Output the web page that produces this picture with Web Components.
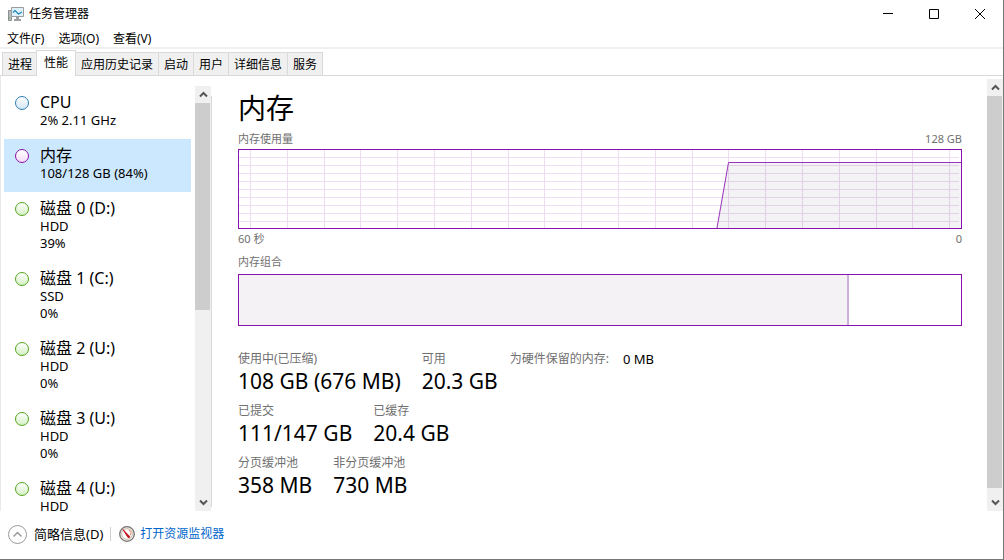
<!DOCTYPE html>
<html lang="zh-CN">
<head>
<meta charset="utf-8">
<title>任务管理器</title>
<style>
  :root {
    --purple: #8b12ae;
    --grid: #ecddf2;
    --muted: #707070;
    --line: #d9d9d9;
  }

  body {
    margin: 0;
    background: #fff;
    color: #000;
    font: 12px/16px "Noto Sans", "Noto Sans CJK SC", sans-serif;
  }
</style>
</head>
<body>
<task-manager></task-manager>

<script>
const disks = [
  ["磁盘 0 (D:)", "HDD", "39%"],
  ["磁盘 1 (C:)", "SSD", "0%"],
  ["磁盘 2 (U:)", "HDD", "0%"],
  ["磁盘 3 (U:)", "HDD", "0%"],
  ["磁盘 4 (U:)", "HDD"],
];

function define(name, html) {
  const template = document.createElement("template");
  template.innerHTML = html;

  customElements.define(name, class extends HTMLElement {
    constructor() {
      super();
      this.attachShadow({ mode: "open" }).append(template.content.cloneNode(true));
    }
  });
}

define("title-bar", `
  <style>
    :host { display: flex; height: 28px; align-items: center; padding-left: 8px; }
    .icon { width: 16px; height: 16px; margin-right: 5px; }
    h1 { flex: 1; margin: 0; font-size: 12px; font-weight: 400; }
    button { width: 46px; height: 28px; padding: 0; border: 0; background: none; display: grid; place-items: center; }
    button svg { width: 11px; height: 11px; fill: none; stroke: #000; }
  </style>
  <svg class="icon" viewBox="0 0 16 16">
    <path d="M.5 4.500h3v10h-3z" fill="#b9bdc0" stroke="#8c9093"/>
    <path d="M1 12h1" stroke="#4fae3a"/>
    <path d="M3.500 1.500h12v9h-12z" fill="#def1fb" stroke="#989c9f"/>
    <path d="M5 6.500l2-2 3.500 3.500L14 6" fill="none" stroke="#1c83b8" stroke-width="1.200"/>
    <path d="M8 11h3v2h2v2H6v-2h2z" fill="#9b9fa2"/>
  </svg>
  <h1><slot></slot></h1>
  <button aria-label="最小化"><svg viewBox="0 0 11 11"><path d="M0 4.500h10"/></svg></button>
  <button aria-label="最大化"><svg viewBox="0 0 11 11"><path d="M.5.5h9v9h-9z"/></svg></button>
  <button aria-label="关闭"><svg viewBox="0 0 11 11"><path d="M0 0l10 10M10 0L0 10"/></svg></button>
`);

define("menu-bar", `
  <style>
    :host { display: flex; gap: 14px; height: 19px; padding-left: 7px; align-items: flex-end; border-bottom: 2px solid #f0f0f0; }
    ::slotted(button) { padding: 0; border: 0; background: none; font: inherit; color: inherit; }
  </style>
  <slot></slot>
`);

define("tab-strip", `
  <style>
    :host { display: flex; height: 26px; padding-left: 2px; align-items: flex-end; border-bottom: 1px solid var(--line); }
    ::slotted(button) {
      height: 23px;
      padding: 2px 5px 0;
      margin: 0 -1px 0 0;
      border: 1px solid var(--line);
      border-bottom: 0;
      background: #f0f0f0;
      font: inherit;
      color: inherit;
    }
    ::slotted(button[aria-selected="true"]) {
      height: 26px;
      padding: 0 7px 1px;
      margin-left: -1px;
      margin-bottom: -1px;
      background: #fff;
    }
  </style>
  <slot></slot>
`);

define("scroll-bar", `
  <style>
    :host { display: flex; flex-direction: column; width: 16px; background: #f0f0f0; }
    button { height: 17px; flex: none; padding: 0; border: 0; background: none; display: grid; place-items: center; }
    svg { width: 9px; height: 7px; fill: none; stroke: #555; stroke-width: 2; }
    .track { flex: 1; }
    .thumb { height: var(--thumb); width: 15px; background: #cdcdcd; }
  </style>
  <button aria-label="向上滚动"><svg viewBox="0 0 9 7"><path d="M1 5.500L4.500 2 8 5.500"/></svg></button>
  <div class="track"><div class="thumb"></div></div>
  <button aria-label="向下滚动"><svg viewBox="0 0 9 7"><path d="M1 1.500L4.500 5 8 1.500"/></svg></button>
`);

define("resource-item", `
  <style>
    :host { display: block; --ring: #55a51c; --tint: #d5f0c5; }
    :host([kind="cpu"]) { --ring: #2a7fb5; --tint: #d3e6f1; }
    :host([kind="memory"]) { --ring: #8b12ae; --tint: #f3dcf5; }
    :host([selected]) { background: #cce8ff; }
    button {
      display: flex;
      width: 100%;
      gap: 11px;
      padding: 6px 0 10px 11px;
      border: 0;
      background: none;
      color: inherit;
      font: inherit;
      text-align: left;
    }
    i {
      box-sizing: border-box;
      width: 14px;
      height: 14px;
      margin-top: 4px;
      border: 1px solid var(--ring);
      border-radius: 50%;
      background: linear-gradient(#fff, var(--tint));
    }
    ::slotted(span) { display: block; font-size: 13px; line-height: 17px; }
    ::slotted([slot="name"]) { font-size: 16px; line-height: 20px; }
  </style>
  <button>
    <i></i>
    <span><slot name="name"></slot><slot></slot></span>
  </button>
`);

define("usage-chart", `
  <style>
    :host { display: block; border: 1px solid var(--purple); }
    svg { display: block; width: 100%; height: 78px; }
    path { fill: none; vector-effect: non-scaling-stroke; }
    .grid { stroke: var(--grid); shape-rendering: crispEdges; }
    .area { fill: rgba(20, 0, 30, .05); }
    .plot { stroke: #9a33b8; }
  </style>
  <svg viewBox="0 0 722 78" preserveAspectRatio="none">
    <path class="grid"/>
    <path class="area" d="M478 78L489.500 12.500H722V78z"/>
    <path class="plot" d="M478 78L489.500 12.500H722"/>
  </svg>
`);

define("composition-bar", `
  <style>
    :host { display: block; height: 50px; border: 1px solid var(--purple); }
    .used { width: 84.500%; height: 100%; box-sizing: border-box; background: #f4f2f4; border-right: 2px solid #cbb0d9; }
  </style>
  <div class="used"></div>
`);

define("stat-value", `
  <style>
    :host { display: block; white-space: nowrap; }
    .label { color: var(--muted); line-height: 22px; }
    .value { font-size: 21px; line-height: 22px; }
    :host([inline]) { display: flex; gap: 14px; }
    :host([inline]) .value { font-size: 13px; }
  </style>
  <div class="label"><slot name="label"></slot></div>
  <div class="value"><slot></slot></div>
`);

define("resource-list", `
  <style>
    :host { display: flex; width: 211px; flex: none; box-sizing: border-box; border-left: 1px solid #eaeaea; padding-top: 10px; }
    nav { flex: 1; margin: 0 4px 0 3px; overflow: hidden; }
    scroll-bar { --thumb: 53%; }
  </style>
  <nav>
    <resource-item kind="cpu"><span slot="name">CPU</span><span>2% 2.11 GHz</span></resource-item>
    <resource-item kind="memory" selected><span slot="name">内存</span><span>108/128 GB (84%)</span></resource-item>
    ${disks.map(([name, ...lines]) => `
      <resource-item>
        <span slot="name">${name}</span>
        ${lines.map(line => `<span>${line}</span>`).join("")}
      </resource-item>
    `).join("")}
  </nav>
  <scroll-bar></scroll-bar>
`);

define("memory-panel", `
  <style>
    :host { display: block; min-width: 0; flex: 1; padding: 12px 25px 0 26px; }
    h2 { margin: 0; font-size: 28px; font-weight: 400; line-height: 40px; }
    .row { display: flex; justify-content: space-between; color: var(--muted); font-size: 11px; line-height: 20px; }
    .row.top { line-height: 21px; }
    .composition { line-height: 25px; }
    .stats { display: flex; gap: 12px; margin-top: 22px; }
    .group { display: flex; flex-direction: column; gap: 8px; }
    .group div { display: flex; gap: 21px; }
  </style>
  <h2>内存</h2>
  <div class="row top"><span>内存使用量</span><span>128 GB</span></div>
  <usage-chart></usage-chart>
  <div class="row"><span>60 秒</span><span>0</span></div>
  <div class="row composition"><span>内存组合</span></div>
  <composition-bar></composition-bar>
  <div class="stats">
    <div class="group">
      <div>
        <stat-value><span slot="label">使用中(已压缩)</span>108 GB (676 MB)</stat-value>
        <stat-value><span slot="label">可用</span>20.3 GB</stat-value>
      </div>
      <div>
        <stat-value><span slot="label">已提交</span>111/147 GB</stat-value>
        <stat-value><span slot="label">已缓存</span>20.4 GB</stat-value>
      </div>
      <div>
        <stat-value><span slot="label">分页缓冲池</span>358 MB</stat-value>
        <stat-value><span slot="label">非分页缓冲池</span>730 MB</stat-value>
      </div>
    </div>
    <stat-value inline><span slot="label">为硬件保留的内存:</span>0 MB</stat-value>
  </div>
`);

define("status-bar", `
  <style>
    :host { display: flex; height: 46px; align-items: center; padding: 0 0 2px 8px; }
    button { display: flex; align-items: center; gap: 7px; padding: 0; border: 0; background: none; color: inherit; font: inherit; font-size: 13px; }
    hr { width: 1px; height: 14px; margin: 0 8px 0 7px; border: 0; background: #d0d0d0; }
    a { display: flex; align-items: center; gap: 5px; color: #0066cc; text-decoration: none; }
  </style>
  <button>
    <svg width="19" height="19" viewBox="0 0 19 19" fill="none" stroke="#999">
      <circle cx="9.500" cy="9.500" r="9"/>
      <path d="M5.500 11.500l4-4 4 4" stroke-width="1.500"/>
    </svg>
    简略信息(D)
  </button>
  <hr>
  <a href="#">
    <svg width="16" height="16" viewBox="0 0 16 16">
      <circle cx="8" cy="8" r="7.300" fill="#f2f0ed" stroke="#77706c" stroke-width="1.300"/>
      <circle cx="8" cy="8" r="5.300" fill="#fff" stroke="#c9b8aa"/>
      <path d="M10 4l2 2.500-1 3" fill="none" stroke="#df8b66"/>
      <path d="M4 3.500l7 7.500-2 .5z" fill="#c8141c" stroke="#c8141c"/>
    </svg>
    打开资源监视器
  </a>
`);

define("task-manager", `
  <style>
    :host {
      display: flex;
      flex-direction: column;
      height: 100vh;
      box-sizing: border-box;
      border: solid #777;
      border-width: 0 1px 1px 0;
    }
    title-bar, menu-bar, tab-strip, status-bar { flex: none; }
    main { display: flex; flex: 1; min-height: 0; }
    .divider { width: 1px; margin: 20px 0 4px; background: var(--line); }
    .page-scroll { margin-top: 3px; --thumb: 98.500%; }
  </style>
  <title-bar>任务管理器</title-bar>
  <menu-bar>
    <button>文件(F)</button>
    <button>选项(O)</button>
    <button>查看(V)</button>
  </menu-bar>
  <tab-strip role="tablist">
    <button role="tab">进程</button>
    <button role="tab" aria-selected="true">性能</button>
    <button role="tab">应用历史记录</button>
    <button role="tab">启动</button>
    <button role="tab">用户</button>
    <button role="tab">详细信息</button>
    <button role="tab">服务</button>
  </tab-strip>
  <main>
    <resource-list></resource-list>
    <div class="divider"></div>
    <memory-panel></memory-panel>
    <scroll-bar class="page-scroll"></scroll-bar>
  </main>
  <status-bar></status-bar>
`);

const panel = document.querySelector("task-manager").shadowRoot.querySelector("memory-panel");
const chart = panel.shadowRoot.querySelector("usage-chart");
let grid = "";
for (let i = 0; i < 20; i++) {
  grid += `M${Math.round(11 + i * 36.8) + 0.5} 0V78`;
}
for (let y = 7.5; y < 78; y += 8) {
  grid += `M0 ${y}H720`;
}
chart.shadowRoot.querySelector(".grid").setAttribute("d", grid);
</script>
</body>
</html>
